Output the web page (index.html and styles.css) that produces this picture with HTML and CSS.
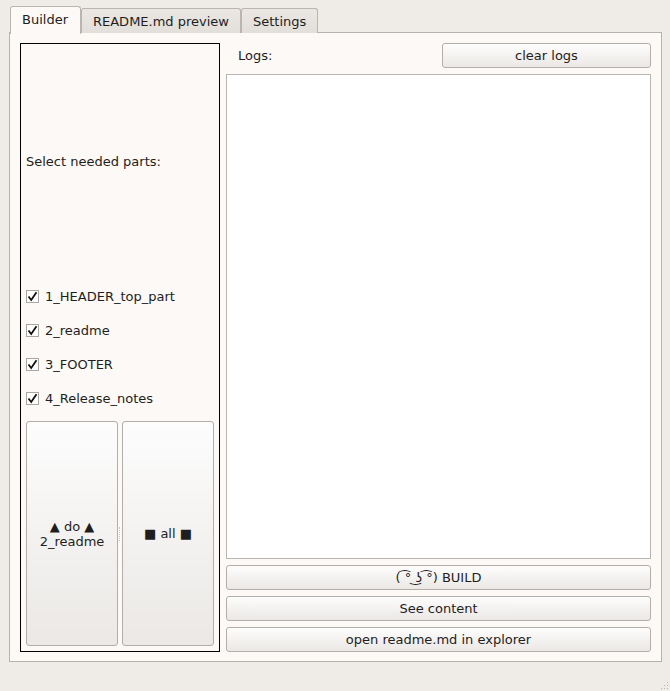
FILE: index.html
```html
<!DOCTYPE html>
<html>
<head>
<meta charset="utf-8">
<link rel="stylesheet" href="styles.css">
</head>
<body>
<div class="window">
  <div class="tabs">
    <div class="tab active">Builder</div>
    <div class="tab">README.md preview</div>
    <div class="tab">Settings</div>
  </div>
  <div class="pane">
    <div class="parts">
      <div class="parts-label">Select needed parts:</div>
      <label class="check"><span class="box"><svg width="11" height="11" viewBox="0 0 11 11"><path d="M1.5 5.5 L4.2 9 L9.5 1.2" fill="none" stroke="#111" stroke-width="1.8"/></svg></span>1_HEADER_top_part</label>
      <label class="check"><span class="box"><svg width="11" height="11" viewBox="0 0 11 11"><path d="M1.5 5.5 L4.2 9 L9.5 1.2" fill="none" stroke="#111" stroke-width="1.8"/></svg></span>2_readme</label>
      <label class="check"><span class="box"><svg width="11" height="11" viewBox="0 0 11 11"><path d="M1.5 5.5 L4.2 9 L9.5 1.2" fill="none" stroke="#111" stroke-width="1.8"/></svg></span>3_FOOTER</label>
      <label class="check"><span class="box"><svg width="11" height="11" viewBox="0 0 11 11"><path d="M1.5 5.5 L4.2 9 L9.5 1.2" fill="none" stroke="#111" stroke-width="1.8"/></svg></span>4_Release_notes</label>
      <div class="bigbtns">
        <button class="btn big">▲ do ▲<br>2_readme</button>
        <div class="splitter"></div>
        <button class="btn big">■ all ■</button>
      </div>
    </div>
    <div class="right">
      <div class="logs-row">
        <span class="logs-label">Logs:</span>
        <button class="btn clear">clear logs</button>
      </div>
      <div class="logs"></div>
      <button class="btn wide">( ͡° ͜ʖ ͡°) BUILD</button>
      <button class="btn wide">See content</button>
      <button class="btn wide">open readme.md in explorer</button>
    </div>
  </div>
  <div class="grip">
    <svg width="10" height="10" viewBox="0 0 10 10">
      <rect x="8" y="2" width="1" height="1" fill="#b8b3ae"/>
      <rect x="5" y="5" width="1" height="1" fill="#b8b3ae"/>
      <rect x="8" y="5" width="1" height="1" fill="#b8b3ae"/>
      <rect x="2" y="8" width="1" height="1" fill="#b8b3ae"/>
      <rect x="5" y="8" width="1" height="1" fill="#b8b3ae"/>
      <rect x="8" y="8" width="1" height="1" fill="#b8b3ae"/>
    </svg>
  </div>
</div>
</body>
</html>
```

FILE: styles.css
```css
* { box-sizing: border-box; }
html, body {
  margin: 0;
  padding: 0;
  background: #efebe7;
}
body {
  font-family: "DejaVu Sans", sans-serif;
  font-size: 13px;
  color: #1e1e1e;
}
.window {
  width: 670px;
  height: 691px;
  position: relative;
}
.tabs {
  display: flex;
  align-items: flex-end;
  padding-left: 10px;
  padding-top: 6px;
  height: 33px;
  position: relative;
  z-index: 2;
}
.tab {
  height: 25px;
  padding: 1px 11px 0 11px;
  display: flex;
  align-items: center;
  border: 1px solid #bab5b0;
  border-bottom: none;
  border-radius: 3px 3px 0 0;
  background: linear-gradient(#ebe7e3, #e2ded9);
}
.tab.active {
  height: 28px;
  background: #fcf9f6;
  padding: 0 12px 3px 11px;
  margin-bottom: -1px;
  position: relative;
  z-index: 3;
}
.pane {
  margin: -1px 8px 0 9px;
  height: 630px;
  border: 1px solid #b7b2ad;
  background: #fcf9f6;
  padding: 10px 10px 9px 10px;
  display: flex;
  gap: 6px;
  position: relative;
  z-index: 1;
}
.parts {
  width: 200px;
  border: 1px solid #000;
  padding: 5px;
  display: flex;
  flex-direction: column;
}
.parts-label {
  flex: 1;
  display: flex;
  align-items: center;
  padding-bottom: 12px;
}
.check {
  height: 20px;
  display: flex;
  align-items: center;
  margin-bottom: 14px;
  white-space: nowrap;
}
.box {
  width: 13px;
  height: 13px;
  border: 1px solid #aaa6a1;
  background: #fff;
  margin-right: 6px;
  display: flex;
  align-items: center;
  justify-content: center;
}
.box svg { display: block; }
.bigbtns {
  display: flex;
  height: 225px;
  margin-top: -1px;
}
.btn {
  font-family: "DejaVu Sans", sans-serif;
  font-size: 13px;
  color: #1e1e1e;
  border: 1px solid #b3aea9;
  border-radius: 3px;
  background: linear-gradient(#fdfdfd, #ebe8e5);
  padding: 0;
  margin: 0;
}
.big {
  width: 92px;
  height: 100%;
  line-height: 15px;
}
.splitter {
  width: 4px;
  position: relative;
}
.splitter::after {
  content: "";
  position: absolute;
  left: 1px;
  top: 106px;
  height: 14px;
  border-left: 1px dotted #c9c5c1;
}
.right {
  flex: 1;
  display: flex;
  flex-direction: column;
}
.logs-row {
  height: 25px;
  display: flex;
  align-items: center;
  justify-content: space-between;
}
.logs-label {
  padding-left: 12px;
}
.clear {
  width: 209px;
  height: 25px;
}
.logs {
  margin-top: 6px;
  height: 485px;
  background: #fff;
  border: 1px solid #b9b5b0;
}
.wide {
  margin-top: 6px;
  height: 25px;
  width: 100%;
}
.grip {
  position: absolute;
  right: 1px;
  bottom: 1px;
  width: 10px;
  height: 10px;
}
.grip svg { display: block; }
```
